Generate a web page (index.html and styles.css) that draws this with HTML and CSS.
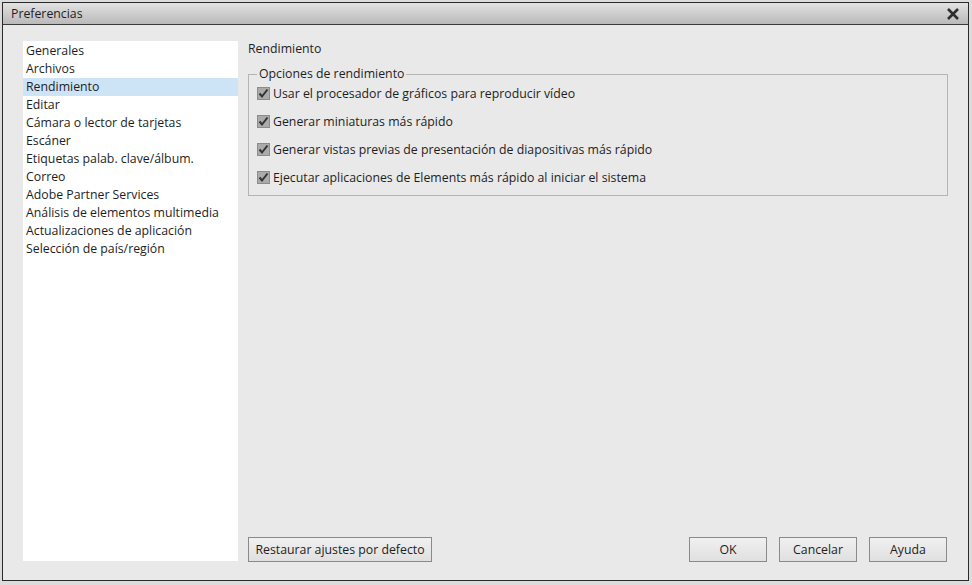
FILE: index.html
```html
<!DOCTYPE html>
<html lang="es">
<head>
    <meta charset="UTF-8">
    <title>Preferencias</title>
    <link rel="stylesheet" href="styles.css">
</head>
<body>
    <div class="window">
        <div class="titlebar">
            <span class="title">Preferencias</span>
            <svg class="close" width="12" height="12" viewBox="0 0 12 12"><path d="M1 1 L11 11 M11 1 L1 11" stroke="#2e2e2e" stroke-width="2.6"/></svg>
        </div>
        <div class="content">
            <ul class="nav">
                <li>Generales</li>
                <li>Archivos</li>
                <li class="selected">Rendimiento</li>
                <li>Editar</li>
                <li>Cámara o lector de tarjetas</li>
                <li>Escáner</li>
                <li>Etiquetas palab. clave/álbum.</li>
                <li>Correo</li>
                <li>Adobe Partner Services</li>
                <li>Análisis de elementos multimedia</li>
                <li>Actualizaciones de aplicación</li>
                <li>Selección de país/región</li>
            </ul>

            <div class="panel">
                <div class="panel-title">Rendimiento</div>
                <fieldset class="group">
                    <legend>Opciones de rendimiento</legend>
                    <div class="checks">
                        <label class="check"><span class="box"><svg width="13" height="13" viewBox="0 0 13 13"><path d="M2.5 6.5 L5 9.5 L10.5 2.5" fill="none" stroke="#333" stroke-width="2"/></svg></span>Usar el procesador de gráficos para reproducir vídeo</label>
                        <label class="check"><span class="box"><svg width="13" height="13" viewBox="0 0 13 13"><path d="M2.5 6.5 L5 9.5 L10.5 2.5" fill="none" stroke="#333" stroke-width="2"/></svg></span>Generar miniaturas más rápido</label>
                        <label class="check"><span class="box"><svg width="13" height="13" viewBox="0 0 13 13"><path d="M2.5 6.5 L5 9.5 L10.5 2.5" fill="none" stroke="#333" stroke-width="2"/></svg></span>Generar vistas previas de presentación de diapositivas más rápido</label>
                        <label class="check"><span class="box"><svg width="13" height="13" viewBox="0 0 13 13"><path d="M2.5 6.5 L5 9.5 L10.5 2.5" fill="none" stroke="#333" stroke-width="2"/></svg></span>Ejecutar aplicaciones de Elements más rápido al iniciar el sistema</label>
                    </div>
                </fieldset>

                <div class="footer">
                    <button class="btn btn-wide">Restaurar ajustes por defecto</button>
                    <div class="actions">
                        <button class="btn">OK</button>
                        <button class="btn">Cancelar</button>
                        <button class="btn">Ayuda</button>
                    </div>
                </div>
            </div>
        </div>
    </div>
</body>
</html>
```

FILE: styles.css
```css
body {
    margin: 0;
    padding: 2px 0 0 2px;
    background: #dcdcdc;
    font-family: "Open Sans", "Noto Sans", sans-serif;
    font-size: 12.3px;
    color: #1e1e1e;
}

.window {
    width: 965px;
    height: 577px;
    border: 1px solid #2a2a2a;
    background: #e9e9e9;
    display: flex;
    flex-direction: column;
}

.titlebar {
    height: 21px;
    border-bottom: 1px solid #3a3a3a;
    background: linear-gradient(#e2e2e2, #b9b9b9);
    display: flex;
    align-items: center;
    justify-content: space-between;
    padding: 0 8px 0 8px;
    font-size: 12.3px;
}

.close {
    margin-right: 1px;
}

.content {
    flex: 1;
    display: flex;
    padding: 16px 20px 18px 20px;
    gap: 10px;
}

.nav {
    list-style: none;
    margin: 0 0 1px 0;
    padding: 1px 0 0 0;
    width: 215px;
    background: #fff;
}

.nav li {
    height: 18px;
    line-height: 18px;
    padding-left: 3px;
}

.nav li.selected {
    background: #cde4f7;
}

.panel {
    flex: 1;
    display: flex;
    flex-direction: column;
}

.panel-title {
    line-height: 16px;
}

.group {
    margin: 10px 0 0 0;
    padding: 2px 0 8px 8px;
    border: 1px solid #b4b4b4;
    width: 690px;
}

.group legend {
    padding: 0 2px;
    margin-left: 0;
    line-height: 14px;
}

.checks {
    display: flex;
    flex-direction: column;
    gap: 8px;
}

.check {
    display: flex;
    align-items: center;
    height: 20px;
    gap: 3px;
}

.box {
    width: 13px;
    height: 13px;
    background: #ababab;
    border: 1px solid #8c8c8c;
    box-sizing: border-box;
    display: flex;
}

.box svg {
    margin: -1px;
}

.footer {
    margin-top: auto;
    display: flex;
    justify-content: space-between;
    width: 699px;
}

.actions {
    display: flex;
    gap: 12px;
}

.btn {
    font-family: inherit;
    font-size: 12.3px;
    color: #1e1e1e;
    height: 25px;
    width: 78px;
    background: linear-gradient(#f0f0f0, #e0e0e0);
    border: 1px solid #8a8a8a;
    padding: 0;
}

.btn-wide {
    width: 184px;
}
```
